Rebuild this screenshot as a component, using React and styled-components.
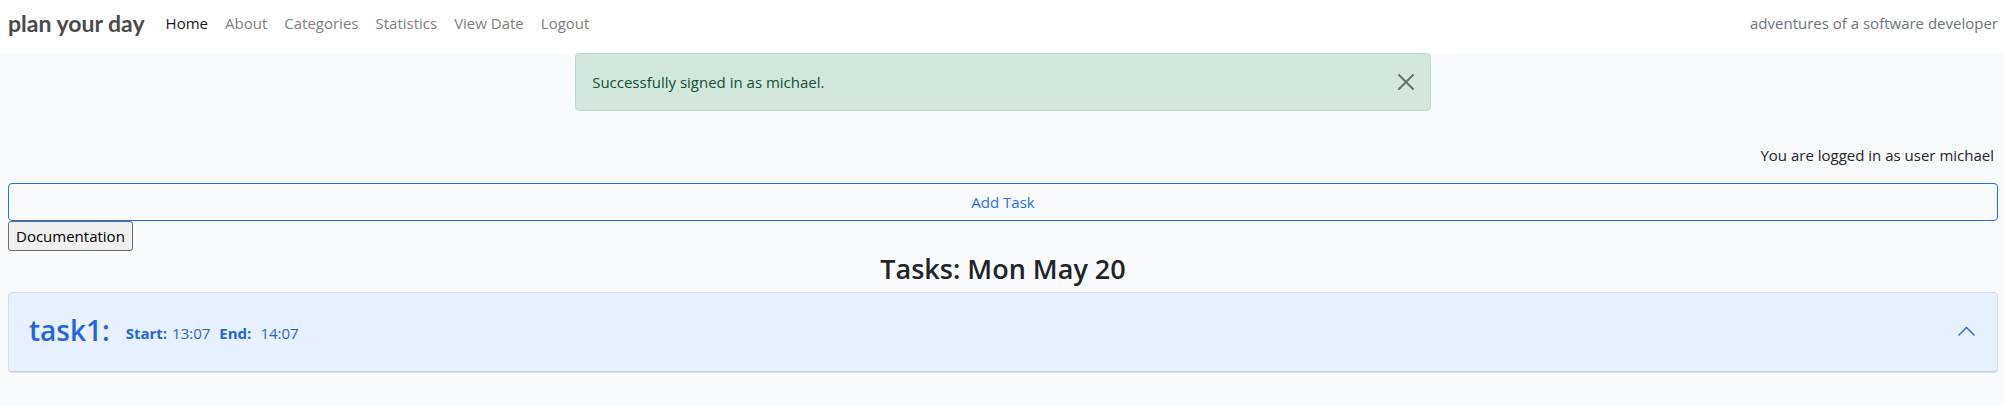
import React from "react";
import styled, { createGlobalStyle } from "styled-components";

const GlobalStyle = createGlobalStyle`
  *, *::before, *::after { box-sizing: border-box; }
  html { background: #f9fafc; }
  body {
    margin: 0;
    background: #f9fafc;
    color: #212529;
    font-family: "Segoe UI", "Open Sans", "Noto Sans", sans-serif;
    font-size: 15px;
    line-height: 24px;
  }
`;

const Navbar = styled.header`
  display: flex;
  align-items: center;
  padding: 7px 6px 14px 8px;
  background: #fff;
`;

const Brand = styled.a`
  margin-right: 13px;
  color: #4a4a4a;
  font-family: Lato, sans-serif;
  font-size: 23px;
  font-weight: 700;
  line-height: 32px;
  text-decoration: none;
`;

const Nav = styled.nav`
  display: flex;
  flex: 1;
  gap: 1px;
`;

const NavLink = styled.a`
  padding: 4px 8px;
  color: ${({ $active }) => ($active ? "#191919" : "#7f7f7f")};
  text-decoration: none;
`;

const Tagline = styled.span`
  color: #6c757d;
`;

const Page = styled.main`
  display: flex;
  flex-direction: column;
  padding: 0 6px 32px 8px;
`;

const Alert = styled.div`
  display: flex;
  align-items: center;
  justify-content: space-between;
  align-self: center;
  width: 43%;
  padding: 16px;
  border: 1px solid #badbcc;
  border-radius: 4px;
  background: #d3e7dd;
  color: #0f5132;
`;

const CloseButton = styled.button`
  display: flex;
  padding: 0;
  border: 0;
  background: none;
  color: #000;
  opacity: 0.5;
`;

const UserNote = styled.p`
  margin: 32px 4px 16px;
  text-align: right;
`;

const AddButton = styled.button`
  padding: 6px 12px;
  border: 1px solid #1f6ff0;
  border-radius: 4px;
  background: transparent;
  color: #1f6ff0;
  font: inherit;
`;

const DocsButton = styled.button`
  align-self: flex-start;
  padding: 2px 7px;
  border: 1px solid #6b6b6b;
  border-radius: 3px;
  background: #efefef;
  color: #000;
  font: inherit;
`;

const Title = styled.h1`
  margin: 0 0 5px;
  font-size: 27px;
  font-weight: 600;
  line-height: 36px;
  text-align: center;
`;

const TaskItem = styled.button`
  display: flex;
  align-items: center;
  justify-content: space-between;
  padding: 22px 22px 27px 20px;
  border: 1px solid #d9dce0;
  border-radius: 4px;
  background: #e7f1ff;
  box-shadow: inset 0 -1px 0 #c9d3e2;
  color: #1f66e0;
  font: inherit;
  text-align: left;
`;

const TaskSummary = styled.span`
  display: flex;
  align-items: flex-end;
  gap: 9px;
`;

const TaskName = styled.span`
  margin-right: 7px;
  font-size: 28px;
  font-weight: 600;
  line-height: 30px;
`;

const TaskTime = styled.span`
  display: flex;
  gap: ${({ $wide }) => ($wide ? 9 : 5)}px;
`;

const links = ["Home", "About", "Categories", "Statistics", "View Date", "Logout"];

export default function App() {
  return (
    <>
      <GlobalStyle />
      <Navbar>
        <Brand href="#">plan your day</Brand>
        <Nav>
          {links.map((label) => (
            <NavLink key={label} href="#" $active={label === "Home"}>
              {label}
            </NavLink>
          ))}
        </Nav>
        <Tagline>adventures of a software developer</Tagline>
      </Navbar>
      <Page>
        <Alert role="alert">
          <span>Successfully signed in as michael.</span>
          <CloseButton type="button" aria-label="Close">
            <svg width="16" height="16" viewBox="0 0 16 16" stroke="currentColor" strokeWidth="2" strokeLinecap="round">
              <path d="M1 1l14 14M15 1L1 15" />
            </svg>
          </CloseButton>
        </Alert>
        <UserNote>You are logged in as user michael</UserNote>
        <AddButton type="button">Add Task</AddButton>
        <DocsButton type="button">Documentation</DocsButton>
        <Title>Tasks: Mon May 20</Title>
        <TaskItem type="button" aria-expanded="true">
          <TaskSummary>
            <TaskName>task1:</TaskName>
            <TaskTime>
              <strong>Start:</strong>
              <span>13:07</span>
            </TaskTime>
            <TaskTime $wide>
              <strong>End:</strong>
              <span>14:07</span>
            </TaskTime>
          </TaskSummary>
          <svg width="17" height="12" viewBox="0 0 17 12" fill="none" stroke="#1f66e0" strokeWidth="1.4" strokeLinecap="round" strokeLinejoin="round">
            <path d="M1 11l7.500-7.500L16 11" />
          </svg>
        </TaskItem>
      </Page>
    </>
  );
}
